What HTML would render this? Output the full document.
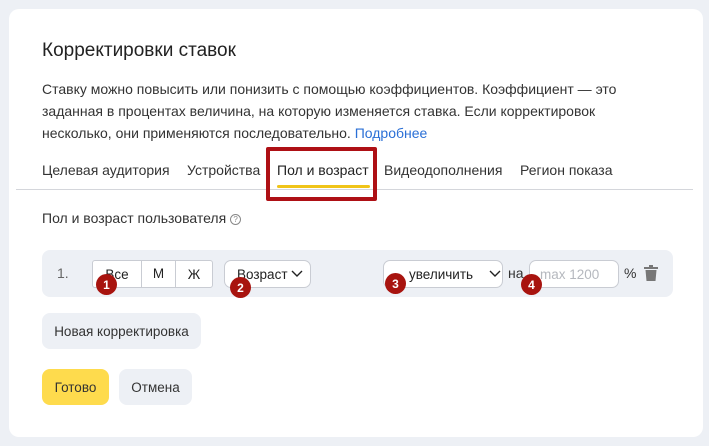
<!DOCTYPE html><html><head><meta charset="utf-8"><style>
*{box-sizing:border-box;margin:0;padding:0}
body{width:709px;height:446px;background:#edf0f5;font-family:"Liberation Sans",sans-serif;color:#222;position:relative;overflow:hidden}
.card{position:absolute;left:9px;top:9px;width:694px;height:428px;background:#fff;border-radius:10px}
.a{position:absolute;white-space:nowrap}
.btn{position:absolute;border-radius:8px;font-size:13.5px;display:flex;align-items:center;justify-content:center}
.badge{position:absolute;width:21px;height:21px;border-radius:50%;background:#a8140f;color:#fff;font-size:12px;font-weight:bold;display:flex;align-items:center;justify-content:center}
.box{position:absolute;background:#fff;border:1px solid #c9ccd3;border-radius:7px;font-size:13.5px;display:flex;align-items:center}
</style></head><body>
<div class="card"></div>
<div class="a" style="left:42px;top:40px;font-size:19px;color:#222">Корректировки ставок</div>
<div class="a" style="left:42px;top:78px;font-size:14px;line-height:22px;color:#333">Ставку можно повысить или понизить с помощью коэффициентов. Коэффициент — это<br>заданная в процентах величина, на которую изменяется ставка. Если корректировок<br>несколько, они применяются последовательно. <span style="color:#2a6fd6">Подробнее</span></div>
<div class="a" style="left:42px;top:162px;font-size:14px;color:#333;word-spacing:0">Целевая аудитория</div>
<div class="a" style="left:187px;top:162px;font-size:14px;color:#333">Устройства</div>
<div class="a" style="left:277px;top:162px;font-size:14px;color:#222">Пол и возраст</div>
<div class="a" style="left:384px;top:162px;font-size:14px;color:#333">Видеодополнения</div>
<div class="a" style="left:520px;top:162px;font-size:14px;color:#333">Регион показа</div>
<div class="a" style="left:16px;top:189px;width:677px;height:1px;background:#d4d6db"></div>
<div class="a" style="left:277px;top:185px;width:93px;height:3px;background:#f0c419;border-radius:2px"></div>
<div class="a" style="left:266px;top:147px;width:111px;height:54px;border:4px solid #ae1015;border-radius:2px"></div>
<div class="a" style="left:42px;top:210px;font-size:14px;color:#333">Пол и возраст пользователя <span style="display:inline-block;width:11px;height:11px;border:1px solid #888;border-radius:50%;font-size:8px;line-height:9px;text-align:center;color:#888;vertical-align:1px">?</span></div>
<div class="a" style="left:42px;top:250px;width:631px;height:47px;background:#edf0f5;border-radius:8px"></div>
<div class="a" style="left:57px;top:265px;font-size:14px;color:#666">1.</div>
<div class="box" style="left:92px;top:260px;width:121px;height:28px;border-radius:3px">
<span style="width:48px;text-align:center">Все</span><span style="width:35px;text-align:center;border-left:1px solid #c9ccd3;border-right:1px solid #c9ccd3;line-height:26px">М</span><span style="flex:1;text-align:center">Ж</span></div>
<div class="box" style="left:224px;top:260px;width:87px;height:28px;padding-left:12px">Возраст <svg width="12" height="8" style="margin-left:3px"><path d="M1 1l5 5 5-5" fill="none" stroke="#222" stroke-width="1.4"/></svg></div>
<div class="box" style="left:383px;top:260px;width:120px;height:28px;padding-left:25px">увеличить<svg width="12" height="8" style="margin-left:16px"><path d="M1 1l5 5 5-5" fill="none" stroke="#222" stroke-width="1.4"/></svg></div>
<div class="a" style="left:508px;top:265px;font-size:14px;color:#333">на</div>
<div class="box" style="left:529px;top:260px;width:90px;height:28px;padding-left:10px;color:#b5b8be">max 1200</div>
<div class="a" style="left:624px;top:265px;font-size:14px;color:#333">%</div>
<svg class="a" style="left:644px;top:265px" width="14" height="17"><rect x="0" y="2" width="14" height="2" fill="#777"/><rect x="5" y="0" width="4" height="2" fill="#777"/><path d="M1.5 5h11l-1 11h-9z" fill="#777"/></svg>
<div class="badge" style="left:96px;top:274px">1</div>
<div class="badge" style="left:230px;top:277px">2</div>
<div class="badge" style="left:385px;top:273px">3</div>
<div class="badge" style="left:521px;top:274px">4</div>
<div class="btn" style="left:42px;top:313px;width:159px;height:36px;background:#edf0f5;color:#333">Новая корректировка</div>
<div class="btn" style="left:42px;top:369px;width:67px;height:36px;background:#fedb4d;color:#333">Готово</div>
<div class="btn" style="left:119px;top:369px;width:73px;height:36px;background:#edf0f5;color:#333">Отмена</div>
</body></html>
